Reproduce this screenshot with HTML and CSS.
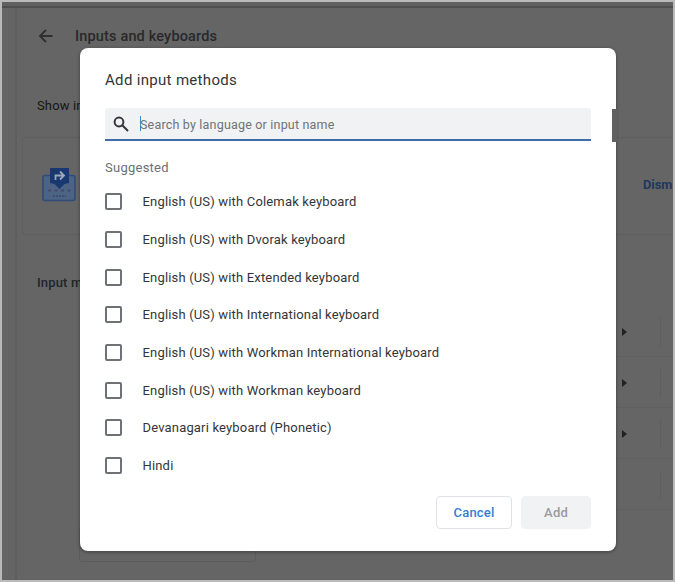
FILE: index.html
```html
<!DOCTYPE html>
<html lang="en">
<head>
<meta charset="utf-8">
<title>Inputs and keyboards</title>
<link rel="stylesheet" href="styles.css">
</head>
<body>
<div class="window">
  <div class="toolbar"></div>
  <div class="page">
    <main class="settings">
      <header class="page-header">
        <svg class="back" viewBox="0 0 16 16"><path d="M14.5 8H2M8 2L2 8l6 6"/></svg>
        <h1>Inputs and keyboards</h1>
      </header>
      <div class="show-row">Show in</div>
      <section class="card">
        <svg class="card-icon" viewBox="0 0 34 36">
          <rect x="1" y="8.500" width="32" height="25" rx="2" fill="#4d6384" stroke="#2d4b7c" stroke-width="1.5"/>
          <path d="M8 1h19v15l-4.500 1-5 5-5-5L8 16z" fill="#18386f"/>
          <path d="M13.500 13V8.500h8M18 4.500l4 4-4 4" fill="none" stroke="#9ca8ba" stroke-width="1.800"/>
          <path d="M6 23.500h23" stroke="#454b68" stroke-width="2" stroke-dasharray="3 3.500"/>
          <path d="M11 29h13" stroke="#35496b" stroke-width="1.500" stroke-dasharray="2 1"/>
        </svg>
        <span class="dismiss">Dism</span>
      </section>
      <h2>Input m</h2>
      <div class="methods">
        <div class="method"><i class="arrow"></i><i class="rule"></i></div>
        <div class="method"><i class="arrow"></i><i class="rule"></i></div>
        <div class="method"><i class="arrow"></i><i class="rule"></i></div>
        <div class="method"><i class="arrow none"></i><i class="rule"></i></div>
      </div>
      <div class="add-box"></div>
    </main>
  </div>
  <div class="dialog" role="dialog">
    <h3>Add input methods</h3>
    <div class="search">
      <svg viewBox="0 0 16 16"><circle cx="6" cy="6" r="4.400"/><path d="M9.300 9.300L15 15"/></svg>
      <span class="caret"></span><span class="hint">Search by language or input name</span>
    </div>
    <div class="suggested">Suggested</div>
    <ul>
      <li><i class="check"></i><span>English (US) with Colemak keyboard</span></li>
      <li><i class="check"></i><span>English (US) with Dvorak keyboard</span></li>
      <li><i class="check"></i><span>English (US) with Extended keyboard</span></li>
      <li><i class="check"></i><span>English (US) with International keyboard</span></li>
      <li><i class="check"></i><span>English (US) with Workman International keyboard</span></li>
      <li><i class="check"></i><span>English (US) with Workman keyboard</span></li>
      <li><i class="check"></i><span>Devanagari keyboard (Phonetic)</span></li>
      <li><i class="check"></i><span>Hindi</span></li>
    </ul>
    <div class="actions"><button class="cancel">Cancel</button><button class="add" disabled>Add</button></div>
    <div class="scroll-thumb"></div>
  </div>
</div>
</body>
</html>
```
FILE: styles.css
```css
* { box-sizing: border-box; }
body { margin: 0; font-family: Roboto, sans-serif; font-size: 13px; color: #333538; }
h1, h2, h3, ul { margin: 0; padding: 0; }
.window { position: relative; width: 675px; height: 582px; border: 2px solid #bababa; background: #656565; overflow: hidden; }
.toolbar { height: 6px; background: #606060; border-bottom: 2px solid #4e4e4e; }
.page { height: 572px; padding-left: 13px; background: #656565; }
.settings { height: 100%; border-left: 2px solid #5e5e5e; padding-left: 5px; overflow: hidden; }
.page-header { height: 56px; display: flex; align-items: center; padding-left: 16px; gap: 21px; }
.back { width: 16px; height: 16px; fill: none; stroke: #2f2f2f; stroke-width: 1.8; }
h1 { font-size: 14.5px; font-weight: 500; color: #28292b; white-space: nowrap; letter-spacing: .16px; }
.show-row { height: 73px; padding: 34px 0 0 15px; color: #151617; white-space: nowrap; letter-spacing: .15px; }
.card { width: 670px; height: 98px; border: 1px solid #5f5f5f; border-radius: 4px; padding: 29px 0 0 19px; display: flex; }
.card-icon { width: 34px; height: 36px; flex: none; }
.dismiss { margin: 10px 0 0 567px; font-weight: 700; font-size: 12.8px; color: #1f385d; }
h2 { height: 71px; padding: 40px 0 0 15px; font-size: 13px; line-height: 16px; font-weight: 500; color: #222426; letter-spacing: .15px; }
.methods { padding-left: 58px; }
.method { height: 51px; width: 640px; border-bottom: 1px solid #606060; display: flex; align-items: center; padding: 1px 0 0 542px; gap: 33px; }
.arrow { border-left: 5px solid #222; border-top: 4px solid transparent; border-bottom: 4px solid transparent; }
.arrow.none { visibility: hidden; }
.rule { width: 1px; height: 28px; background: #5e5e5e; }
.add-box { width: 177px; height: 36px; margin: 16px 0 0 57px; border: 1px solid #5c5c5c; border-radius: 3px; }
.dialog { position: absolute; left: 78px; top: 46px; width: 536px; height: 503px; padding: 21px 25px 0; background: #fff; border-radius: 8px; box-shadow: 0 1px 3px 1px rgba(0,0,0,.25); }
h3 { height: 39px; font-size: 15px; line-height: 22px; font-weight: 400; color: #333538; letter-spacing: .32px; }
.search { height: 33px; background: #f1f2f4; border-bottom: 2px solid #3f6ca8; border-radius: 3px 3px 0 0; display: flex; align-items: center; padding-left: 8px; }
.search svg { width: 16px; height: 16px; fill: none; stroke: #333538; stroke-width: 2; }
.caret { width: 1px; height: 15px; margin-left: 11px; background: #4a87c8; }
.hint { margin-left: -1px; padding-top: 1px; color: #6f7378; font-size: 12.5px; letter-spacing: .19px; }
.suggested { height: 42px; padding-top: 19px; line-height: 16px; color: #6d7074; letter-spacing: .25px; }
ul { list-style: none; }
li { height: 37.65px; display: flex; align-items: center; gap: 20.5px; letter-spacing: .17px; }
.check { width: 17px; height: 17px; border: 2px solid #6e7175; border-radius: 2px; }
.actions { display: flex; justify-content: flex-end; gap: 9px; margin-top: 12px; }
button { height: 33px; padding: 0; border-radius: 4px; font: 500 13px Roboto, sans-serif; letter-spacing: .2px; }
.cancel { width: 76px; border: 1px solid #dfe2e7; background: #fff; color: #367cd4; }
.add { width: 70px; border: 1px solid #f0f1f3; background: #f1f2f4; color: #999ca0; }
.scroll-thumb { position: absolute; right: -1px; top: 61px; width: 5px; height: 33px; background: #606060; }
```
